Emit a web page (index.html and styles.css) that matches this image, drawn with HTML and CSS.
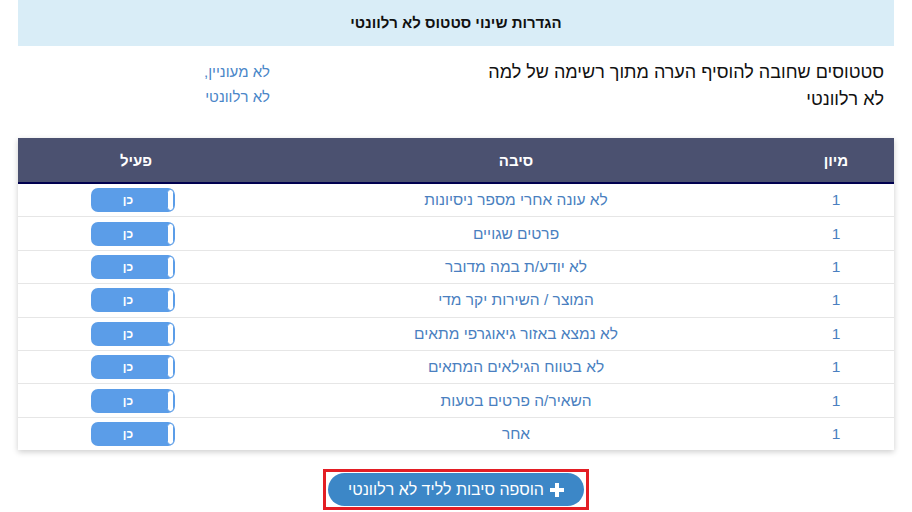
FILE: index.html
```html
<!DOCTYPE html>
<html lang="he" dir="rtl">
<head>
    <meta charset="UTF-8">
    <title>הגדרות שינוי סטטוס לא רלוונטי</title>
    <link rel="stylesheet" href="styles.css">
</head>
<body>
    <div class="page">
        <div class="title-box">הגדרות שינוי סטטוס לא רלוונטי</div>

        <div class="info-row">
            <div class="info-label">סטטוסים שחובה להוסיף הערה מתוך רשימה של למה לא רלוונטי</div>
            <div class="info-links">
                <a href="#">לא מעוניין,</a>
                <a href="#">לא רלוונטי</a>
            </div>
        </div>

        <div class="table-box">
            <table class="reasons">
                <thead>
                    <tr>
                        <th class="col-sort">מיון</th>
                        <th class="col-reason">סיבה</th>
                        <th class="col-active">פעיל</th>
                    </tr>
                </thead>
                <tbody>
                    <tr>
                        <td>1</td>
                        <td>לא עונה אחרי מספר ניסיונות</td>
                        <td><span class="toggle">כן<i class="knob"></i></span></td>
                    </tr>
                    <tr>
                        <td>1</td>
                        <td>פרטים שגויים</td>
                        <td><span class="toggle">כן<i class="knob"></i></span></td>
                    </tr>
                    <tr>
                        <td>1</td>
                        <td>לא יודע/ת במה מדובר</td>
                        <td><span class="toggle">כן<i class="knob"></i></span></td>
                    </tr>
                    <tr>
                        <td>1</td>
                        <td>המוצר / השירות יקר מדי</td>
                        <td><span class="toggle">כן<i class="knob"></i></span></td>
                    </tr>
                    <tr>
                        <td>1</td>
                        <td>לא נמצא באזור גיאוגרפי מתאים</td>
                        <td><span class="toggle">כן<i class="knob"></i></span></td>
                    </tr>
                    <tr>
                        <td>1</td>
                        <td>לא בטווח הגילאים המתאים</td>
                        <td><span class="toggle">כן<i class="knob"></i></span></td>
                    </tr>
                    <tr>
                        <td>1</td>
                        <td>השאיר/ה פרטים בטעות</td>
                        <td><span class="toggle">כן<i class="knob"></i></span></td>
                    </tr>
                    <tr>
                        <td>1</td>
                        <td>אחר</td>
                        <td><span class="toggle">כן<i class="knob"></i></span></td>
                    </tr>
                </tbody>
            </table>
        </div>

        <div class="actions">
            <span class="highlight">
                <button class="add-btn">
                    <svg width="14" height="14" viewBox="0 0 14 14"><path d="M5 0h4v5h5v4H9v5H5V9H0V5h5z" fill="#fff"/></svg>
                    הוספה סיבות לליד לא רלוונטי
                </button>
            </span>
        </div>
    </div>
</body>
</html>
```

FILE: styles.css
```css
body {
    margin: 0;
    background: #fff;
    font-family: "Liberation Sans", Arial, sans-serif;
    color: #222;
}

.page {
    width: 876px;
    margin: 0 18px;
}

.title-box {
    height: 46px;
    line-height: 46px;
    background-color: #d9edf7;
    text-align: center;
    font-size: 15px;
    font-weight: bold;
    color: #111;
}

/* שורת הסבר */
.info-row {
    display: flex;
    padding-top: 13px;
}

.info-label {
    width: 400px;
    padding-right: 10px;
    font-size: 18px;
    line-height: 27px;
    color: #111;
}

.info-links {
    margin-right: 214px;
    display: flex;
    flex-direction: column;
    font-size: 15px;
    line-height: 25px;
}

.info-links a {
    color: #4a86c8;
    text-decoration: none;
}

/* טבלה */
.table-box {
    margin-top: 25px;
    background: #fff;
    box-shadow: 0 2px 6px rgba(0, 0, 0, 0.2);
}

.reasons {
    width: 100%;
    border-collapse: collapse;
    table-layout: fixed;
}

.reasons thead th {
    height: 44px;
    padding: 0;
    background-color: #4b5170;
    border-bottom: 2px solid #00004f;
    color: #fff;
    font-size: 15px;
    font-weight: bold;
}

.reasons .col-sort {
    width: 116px;
}

.reasons .col-active {
    width: 236px;
}

.reasons td {
    height: 32.4px;
    padding: 0;
    text-align: center;
    font-size: 15.5px;
    color: #4a7fc0;
    border-bottom: 1px solid #e6e6e6;
}

.reasons tbody tr:last-child td {
    border-bottom: none;
}

.toggle {
    position: relative;
    display: inline-block;
    vertical-align: middle;
    width: 84px;
    height: 24px;
    line-height: 24px;
    margin-right: 6px;
    border-radius: 7px;
    background-color: #5b9de8;
    color: #fff;
    font-size: 12px;
    font-weight: bold;
    text-align: center;
    padding-right: 10px;
    box-sizing: border-box;
}

.knob {
    position: absolute;
    top: 1px;
    right: 1px;
    width: 5px;
    height: 20px;
    border: 1px solid #5b9de8;
    border-radius: 4px;
    background: #fff;
}

/* כפתור הוספה */
.actions {
    text-align: center;
    padding-top: 19px;
}

.highlight {
    display: inline-block;
    border: 3px solid #e31e24;
    padding: 1px 2px;
    line-height: 0;
}

.add-btn {
    display: inline-flex;
    align-items: center;
    gap: 6px;
    height: 33px;
    padding: 0 20px;
    border: none;
    border-radius: 17px;
    background-color: #3c87c7;
    color: #fff;
    font-family: "Liberation Sans", Arial, sans-serif;
    font-size: 16px;
    cursor: pointer;
}
```
